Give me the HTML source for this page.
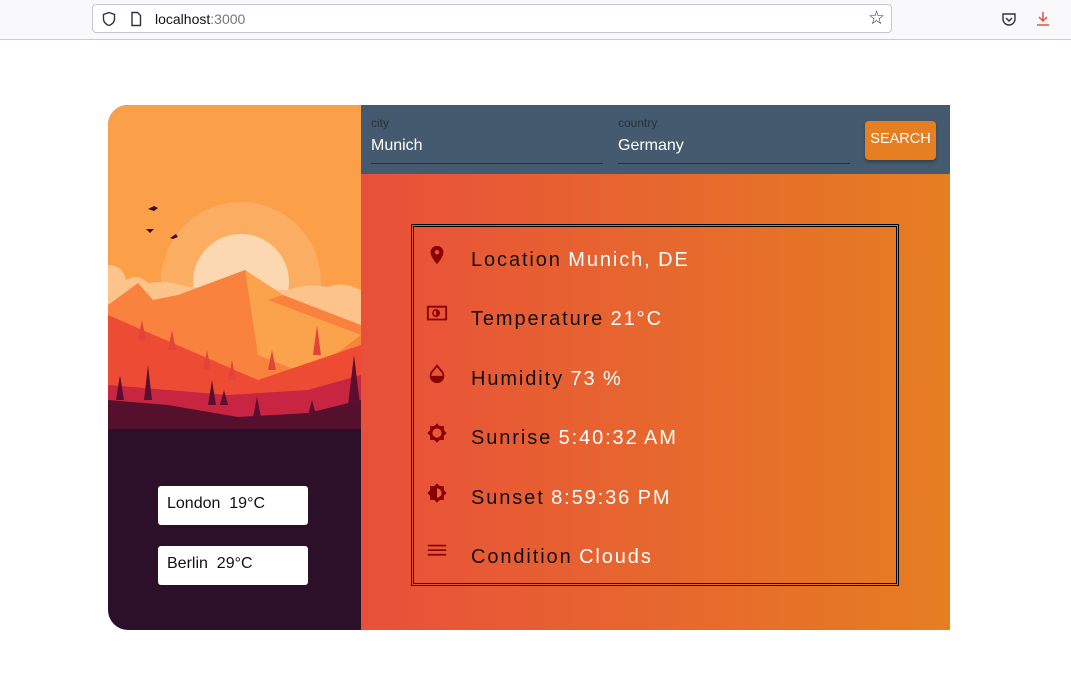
<!DOCTYPE html>
<html><head><style>
body{margin:0;width:1071px;height:683px;background:#fff;font-family:"Liberation Sans",sans-serif;position:relative;overflow:hidden}
.chrome{position:absolute;left:0;top:0;width:1071px;height:39px;background:#f9f9fb;border-bottom:1px solid #ccc}
.url{position:absolute;left:92px;top:4px;width:800px;height:29px;background:#fff;border:1px solid #c8c8cc;border-radius:4px;box-sizing:border-box}
.card{position:absolute;left:108px;top:105px;width:842px;height:525px}
.left{position:absolute;left:0;top:0;width:253px;height:525px;border-radius:20px 0 0 20px;overflow:hidden;background:#2c1029}
.head{position:absolute;left:253px;top:0;width:589px;height:69px;background:#455a6e}
.main{position:absolute;left:253px;top:69px;width:589px;height:456px;background:linear-gradient(90deg,#e8503a,#e67e22)}
.lbl{position:absolute;font-size:12px;color:#26323c}
.val{position:absolute;font-size:16px;color:#fff}
.line{position:absolute;height:1px;background:#263238}
.btn{position:absolute;left:504px;top:16px;width:71px;height:39px;background:#e67e22;border-radius:4px;color:#fff;font-size:14.5px;line-height:36px;text-align:center;box-shadow:0 2px 3px rgba(0,0,0,.3)}
.box{position:absolute;left:303px;top:119px;width:488px;height:362px;border:3px double #000;box-sizing:border-box}
.row{position:absolute;left:57px;font-size:20px;letter-spacing:1.9px;color:#111;word-spacing:-1px}
.row span{color:#fff}
.ic{position:absolute;left:12px;width:22px;height:22px}
.city{position:absolute;left:50px;width:150px;height:39px;background:#fff;border-radius:3px;font-size:16px;line-height:35px;padding-left:9px;box-sizing:border-box;color:#111}
</style></head><body>
<div class="chrome"><div class="url">
<svg style="position:absolute;left:8px;top:6px" width="16" height="16" viewBox="0 0 16 16"><path d="M8 1.5 L13.5 3.5 V8 C13.5 11 11 13.5 8 14.5 C5 13.5 2.5 11 2.5 8 V3.5 Z" fill="none" stroke="#333" stroke-width="1.4"/></svg>
<svg style="position:absolute;left:36px;top:6px" width="14" height="16" viewBox="0 0 14 16"><path d="M3 1.5 H8.5 L11.5 4.5 V14.5 H3 Z" fill="none" stroke="#333" stroke-width="1.4"/></svg>
<div style="position:absolute;left:62px;top:6px;font-size:14px;color:#111">localhost<span style="color:#777">:3000</span></div>
<div style="position:absolute;left:775px;top:2px;font-size:19px;color:#333">☆</div>
</div>
<svg style="position:absolute;left:1001px;top:11px" width="16" height="16" viewBox="0 0 16 16"><path d="M2 3 H14 V8 A6 6 0 0 1 2 8 Z M5 7 L8 10 L11 7" fill="none" stroke="#333" stroke-width="1.4"/></svg>
<svg style="position:absolute;left:1035px;top:10px" width="16" height="18" viewBox="0 0 16 18"><path d="M8 2 V11 M4 7 L8 11 L12 7 M2 15 H14" fill="none" stroke="#e8503a" stroke-width="1.5"/></svg>
</div>
<div class="card">
<div class="left">
<svg width="253" height="324" viewBox="0 0 253 324" style="position:absolute;left:0;top:0">
<rect width="253" height="324" fill="#fb9f49"/>
<circle cx="133" cy="177" r="80" fill="#fbad62"/>
<circle cx="133" cy="177" r="48" fill="#fbd8b0"/>
<path d="M0 160 Q15 160 18 175 Q30 168 40 178 Q60 175 80 182 L180 185 Q200 178 220 182 Q235 176 253 185 V324 H0Z" fill="#fcc38a"/>
<path d="M0 200 L30 178 L45 195 L70 190 L137 165 L175 190 L253 220 V324 H0Z" fill="#f9823f"/>
<path d="M137 165 L175 190 L160 195 L253 230 L200 270 L150 250Z" fill="#fba24d"/>
<path d="M0 210 L150 275 L253 240 V324 H0Z" fill="#ee4b35"/>
<path d="M0 280 L60 285 L120 290 L200 285 L253 270 V324 H0Z" fill="#c72541"/>
<path d="M0 295 L60 300 L130 312 L200 308 L253 295 V324 H0Z" fill="#54102d"/>
<g fill="#5a0f2e">
<path d="M8 295 L12 270 L16 295Z M36 295 L40 260 L44 295Z M100 300 L104 275 L108 300Z M112 300 L116 285 L120 300Z M145 312 L149 292 L153 312Z M240 300 L246 250 L252 300Z M200 310 L204 295 L208 310Z"/></g>
<g fill="#e3443a">
<path d="M30 235 L34 215 L38 235Z M60 245 L64 225 L68 245Z M95 265 L99 245 L103 265Z M120 275 L124 255 L128 275Z M205 250 L209 220 L213 250Z M160 265 L164 245 L168 265Z"/></g>
<g fill="#3e0b24"><path d="M40 104 L46 101 L50 103 L46 106Z M38 124 L46 124 L42 128Z M62 133 L68 129 L70 132 L65 134Z"/></g>
</svg>
<div class="city" style="top:381px">London&nbsp; 19°C</div>
<div class="city" style="top:441px">Berlin&nbsp; 29°C</div>
</div>
<div class="head">
<div class="lbl" style="left:10px;top:11px">city</div>
<div class="val" style="left:10px;top:32px">Munich</div>
<div class="line" style="left:10px;top:58px;width:232px"></div>
<div class="lbl" style="left:257px;top:11px">country</div>
<div class="val" style="left:257px;top:32px">Germany</div>
<div class="line" style="left:257px;top:58px;width:232px"></div>
<div class="btn">SEARCH</div>
</div>
<div class="main"></div>
<div class="box">
<svg class="ic" style="top:17px" viewBox="0 0 24 24"><path d="M12 2C8.1 2 5 5.1 5 9c0 5.2 7 13 7 13s7-7.8 7-13c0-3.9-3.1-7-7-7zm0 9.5a2.5 2.5 0 1 1 0-5 2.5 2.5 0 0 1 0 5z" fill="#8b0000"/></svg>
<div class="row" style="top:22px">Location <span>Munich, DE</span></div>
<svg class="ic" style="top:76px" viewBox="0 0 24 24"><path d="M2 4h20v14H2z" fill="none" stroke="#8b0000" stroke-width="2"/><circle cx="11" cy="11" r="3.5" fill="none" stroke="#8b0000" stroke-width="1.6"/><path d="M11 7.5a3.5 3.5 0 0 1 0 7z" fill="#8b0000"/></svg>
<div class="row" style="top:81px">Temperature <span>21°C</span></div>
<svg class="ic" style="top:136px" viewBox="0 0 24 24"><path d="M12 3 L17.5 9.5 A7 7 0 1 1 6.5 9.5Z" fill="none" stroke="#8b0000" stroke-width="2"/><path d="M5 14h14a7 7 0 0 1-14 0z" fill="#8b0000"/></svg>
<div class="row" style="top:141px">Humidity <span>73 %</span></div>
<svg class="ic" style="top:195px" viewBox="0 0 24 24"><path d="M12 1.5l3 3h4.5v4.5l3 3-3 3v4.5H15l-3 3-3-3H4.5V15l-3-3 3-3V4.5H9z" fill="#8b0000"/><circle cx="12" cy="12" r="5" fill="#e65a33"/></svg>
<div class="row" style="top:200px">Sunrise <span>5:40:32 AM</span></div>
<svg class="ic" style="top:255px" viewBox="0 0 24 24"><path d="M12 1.5l3 3h4.5v4.5l3 3-3 3v4.5H15l-3 3-3-3H4.5V15l-3-3 3-3V4.5H9z" fill="#8b0000"/><path d="M12 7a5 5 0 0 1 0 10z" fill="#e66a30"/></svg>
<div class="row" style="top:260px">Sunset <span>8:59:36 PM</span></div>
<svg class="ic" style="top:314px" viewBox="0 0 24 24"><path d="M2 5h20M2 10h20M2 15h20" stroke="#8b0000" stroke-width="1.8"/></svg>
<div class="row" style="top:319px">Condition <span>Clouds</span></div>
</div>
</div>
</body></html>
